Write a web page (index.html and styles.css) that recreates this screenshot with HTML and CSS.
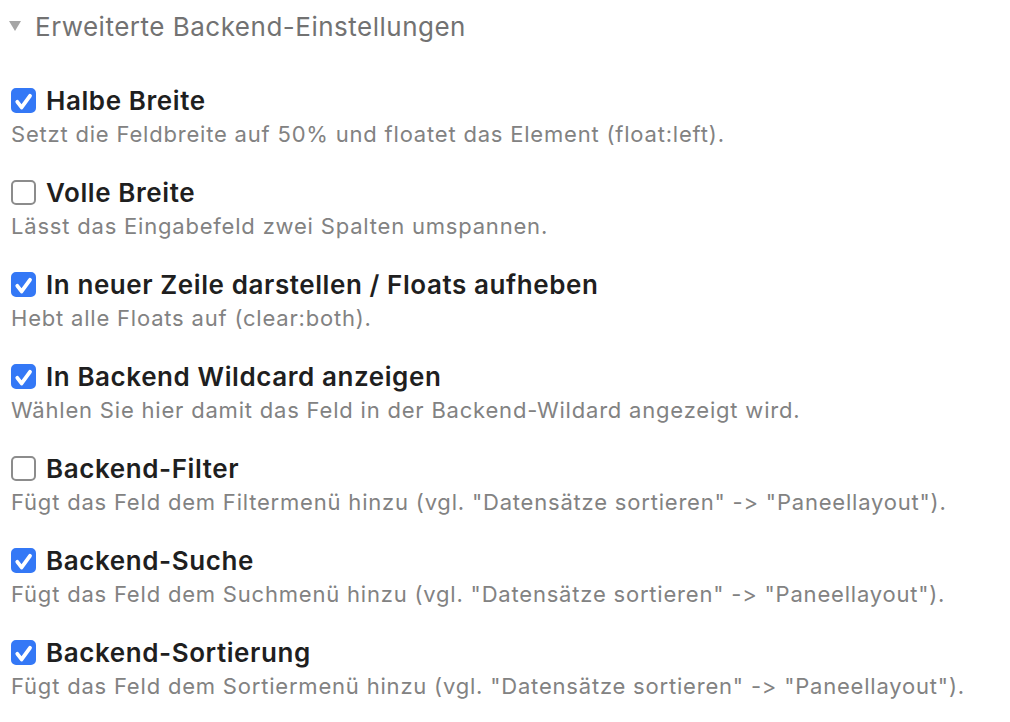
FILE: index.html
```html
<!DOCTYPE html>
<html lang="de">
<head>
    <meta charset="UTF-8">
    <title>Erweiterte Backend-Einstellungen</title>
    <link rel="stylesheet" href="styles.css">
</head>
<body>
    <div class="panel">
        <div class="panel-head">
            <span class="caret"></span>
            <span class="panel-title">Erweiterte Backend-Einstellungen</span>
        </div>

        <div class="option">
            <div class="option-label"><span class="box checked"><svg viewBox="0 0 25 25"><path d="M6.3 13.8l4.3 5.6 8.4-11.6"/></svg></span>Halbe Breite</div>
            <p class="option-desc">Setzt die Feldbreite auf 50% und floatet das Element (float:left).</p>
        </div>
        <div class="option">
            <div class="option-label"><span class="box"></span>Volle Breite</div>
            <p class="option-desc">Lässt das Eingabefeld zwei Spalten umspannen.</p>
        </div>
        <div class="option">
            <div class="option-label"><span class="box checked"><svg viewBox="0 0 25 25"><path d="M6.3 13.8l4.3 5.6 8.4-11.6"/></svg></span>In neuer Zeile darstellen / Floats aufheben</div>
            <p class="option-desc">Hebt alle Floats auf (clear:both).</p>
        </div>
        <div class="option">
            <div class="option-label"><span class="box checked"><svg viewBox="0 0 25 25"><path d="M6.3 13.8l4.3 5.6 8.4-11.6"/></svg></span>In Backend Wildcard anzeigen</div>
            <p class="option-desc">Wählen Sie hier damit das Feld in der Backend-Wildard angezeigt wird.</p>
        </div>
        <div class="option">
            <div class="option-label"><span class="box"></span>Backend-Filter</div>
            <p class="option-desc">Fügt das Feld dem Filtermenü hinzu (vgl. "Datensätze sortieren" -&gt; "Paneellayout").</p>
        </div>
        <div class="option">
            <div class="option-label"><span class="box checked"><svg viewBox="0 0 25 25"><path d="M6.3 13.8l4.3 5.6 8.4-11.6"/></svg></span>Backend-Suche</div>
            <p class="option-desc">Fügt das Feld dem Suchmenü hinzu (vgl. "Datensätze sortieren" -&gt; "Paneellayout").</p>
        </div>
        <div class="option">
            <div class="option-label"><span class="box checked"><svg viewBox="0 0 25 25"><path d="M6.3 13.8l4.3 5.6 8.4-11.6"/></svg></span>Backend-Sortierung</div>
            <p class="option-desc">Fügt das Feld dem Sortiermenü hinzu (vgl. "Datensätze sortieren" -&gt; "Paneellayout").</p>
        </div>
    </div>
</body>
</html>
```

FILE: styles.css
```css
body {
    margin: 0;
    background: #fff;
    font-family: Inter, "Noto Sans", sans-serif;
    font-feature-settings: "calt" 0, "liga" 0;
}
.panel {
    padding: 8px 10px 8px 11px;
}
.panel-head {
    display: flex;
    align-items: center;
    height: 36px;
    margin-bottom: 39px;
}
.caret {
    width: 0;
    height: 0;
    border-left: 6.5px solid transparent;
    border-right: 6.5px solid transparent;
    border-top: 10px solid #a6a6a6;
    margin-left: -2px;
    margin-right: 14px;
}
.panel-title {
    font-size: 26px;
    letter-spacing: 0.5px;
    color: #727272;
}
.option {
    margin-bottom: 27px;
}
.option-label {
    display: flex;
    align-items: center;
    font-size: 26px;
    font-weight: 600;
    letter-spacing: 0.58px;
    color: #1f1f1f;
    height: 34px;
}
.box {
    width: 25px;
    height: 25px;
    box-sizing: border-box;
    border: 2px solid #8c8c8c;
    border-radius: 5px;
    margin-right: 10px;
    flex: none;
    display: flex;
    align-items: center;
    justify-content: center;
}
.box.checked {
    background: #3478f6;
    border-color: #3478f6;
}
.box svg {
    width: 25px;
    height: 25px;
    flex: none;
    fill: none;
    stroke: #fff;
    stroke-width: 3.8;
    stroke-linecap: round;
    stroke-linejoin: round;
}
.option-desc {
    margin: 3px 0 0;
    font-size: 22px;
    letter-spacing: 0.8px;
    color: #828282;
    line-height: 28px;
}
```
